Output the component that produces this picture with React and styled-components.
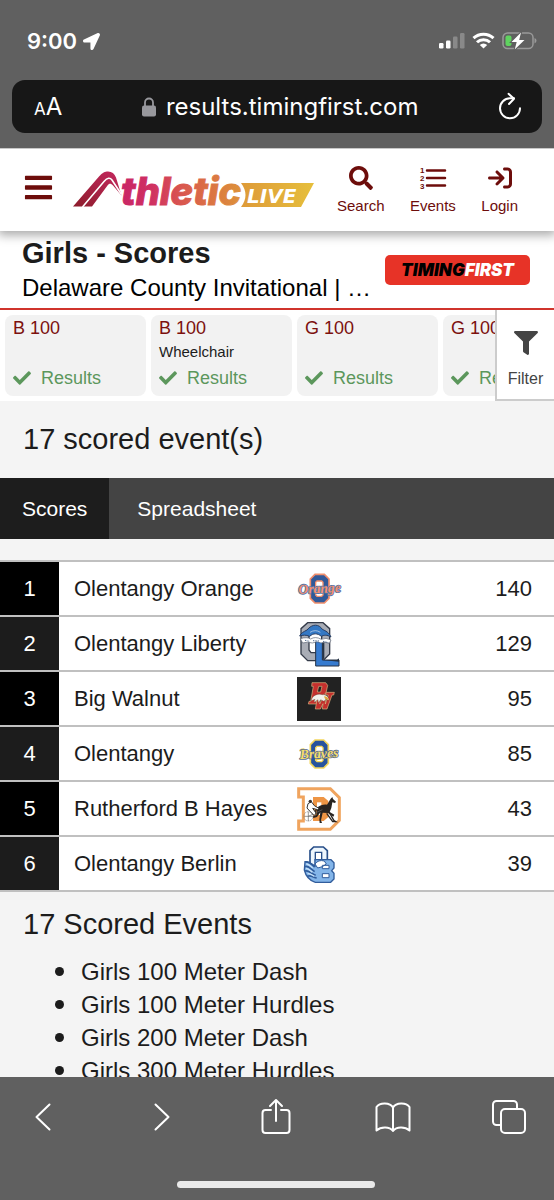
import React, { useState } from 'react';
import styled, { createGlobalStyle } from 'styled-components';
import { FaBars, FaCheck, FaFilter, FaLocationArrow, FaSearch } from 'react-icons/fa';
import { FaArrowRightToBracket } from 'react-icons/fa6';

const EVENTS = [
    { id: 1, name: 'B 100' },
    { id: 2, name: 'B 100', note: 'Wheelchair' },
    { id: 3, name: 'G 100' },
    { id: 4, name: 'G 100' },
];

const TEAMS = [
    { name: 'Olentangy Orange', score: 140, Logo: OrangeLogo },
    { name: 'Olentangy Liberty', score: 129, Logo: LibertyLogo },
    { name: 'Big Walnut', score: 95, Logo: WalnutLogo },
    { name: 'Olentangy', score: 85, Logo: BravesLogo },
    { name: 'Rutherford B Hayes', score: 43, Logo: HayesLogo },
    { name: 'Olentangy Berlin', score: 39, Logo: BerlinLogo },
];

const SCORED_EVENTS = [
    'Girls 100 Meter Dash',
    'Girls 100 Meter Hurdles',
    'Girls 200 Meter Dash',
    'Girls 300 Meter Hurdles',
];

const TABS = ['Scores', 'Spreadsheet'];

export default function App() {
    return (
        <Phone>
            <GlobalStyle />
            <BrowserTop />
            <Page>
                <SiteHeader />
                <MeetTitle />
                <EventStrip />
                <Scores />
            </Page>
            <BrowserBottom />
        </Phone>
    );
}

function BrowserTop() {
    return (
        <TopChrome>
            <StatusBar>
                <Clock>
                    9:00
                    <FaLocationArrow size={17} />
                </Clock>
                <StatusIcons />
            </StatusBar>
            <AddressBar>
                <TextSizeButton type="button" aria-label="Text size">
                    <small>A</small>A
                </TextSizeButton>
                <Address>
                    <svg width="14" height="20" viewBox="0 0 14 20" aria-hidden="true">
                        <path d="M3 9V5.500a4 4 0 0 1 8 0V9" fill="none" stroke="#98989d" strokeWidth="1.800" />
                        <rect y="8.500" width="14" height="11" rx="2" fill="#98989d" />
                    </svg>
                    results.timingfirst.com
                </Address>
                <ChromeButton type="button" aria-label="Reload">
                    <svg width="24" height="28" viewBox="0 0 24 28" {...line}>
                        <path d="M16 5.300H12A10 10 0 1 0 22 15.300" />
                        <path d="M10.500 .8 16 5.700 11 11" />
                    </svg>
                </ChromeButton>
            </AddressBar>
        </TopChrome>
    );
}

function StatusIcons() {
    return (
        <svg width="98" height="18" viewBox="0 0 98 18" aria-hidden="true">
            <rect x="0" y="11" width="4.500" height="5.500" rx="1.200" fill="#fff" />
            <rect x="7" y="8.500" width="4.500" height="8" rx="1.200" fill="#fff" />
            <rect x="14" y="4.500" width="4.500" height="12" rx="1.200" fill="#898989" />
            <rect x="21" y="1" width="4.500" height="15.500" rx="1.200" fill="#898989" />
            <g fill="none" stroke="#fff" strokeWidth="3">
                <path d="M34.500 6.200a14.500 14.500 0 0 1 20 0" />
                <path d="M38 10.300a9.300 9.300 0 0 1 13 0" />
            </g>
            <path d="M44.500 16.500 40.800 13a5.300 5.300 0 0 1 7.400 0z" fill="#fff" />
            <rect x="64" y="1" width="30" height="15.500" rx="4.500" fill="none" stroke="#999" strokeWidth="1.500" />
            <path d="M95.500 6v5.500q2-1 2-2.800t-2-2.700z" fill="#999" />
            <rect x="66.500" y="3.500" width="6" height="10.500" rx="2" fill="#5fd35f" />
            <path
                d="M82 .5 72.500 10h5.200l-2 7.500L85.500 8h-5.300z"
                fill="#fff"
                stroke="#606060"
                strokeWidth="2"
                paintOrder="stroke"
            />
        </svg>
    );
}

function SiteHeader() {
    return (
        <HeaderBar>
            <MenuButton type="button" aria-label="Menu">
                <FaBars size={31} />
            </MenuButton>
            <LogoLink href="#home" aria-label="Athletic Live">
                <AthleticLogo />
            </LogoLink>
            <HeaderNav>
                <HeaderLink href="#search">
                    <FaSearch size={24} />
                    Search
                </HeaderLink>
                <HeaderLink href="#events">
                    <NumberedListIcon />
                    Events
                </HeaderLink>
                <HeaderLink href="#login">
                    <FaArrowRightToBracket size={24} />
                    Login
                </HeaderLink>
            </HeaderNav>
        </HeaderBar>
    );
}

function AthleticLogo() {
    return (
        <svg width="244" height="40" viewBox="0 0 244 40" aria-hidden="true">
            <defs>
                <linearGradient id="brand" gradientUnits="userSpaceOnUse" x1="48" y1="0" x2="170" y2="0">
                    <stop offset="0" stopColor="#c92765" />
                    <stop offset=".25" stopColor="#cf2f63" />
                    <stop offset=".5" stopColor="#d9564f" />
                    <stop offset="1" stopColor="#dd9339" />
                </linearGradient>
                <linearGradient id="swoosh" x1="0" y1="1" x2="1" y2="0">
                    <stop offset="0" stopColor="#8c1c2b" />
                    <stop offset="1" stopColor="#c5285f" />
                </linearGradient>
                <linearGradient id="plate">
                    <stop offset="0" stopColor="#de9a38" />
                    <stop offset="1" stopColor="#e6bf3c" />
                </linearGradient>
            </defs>
            <path
                d="M1 36.500 27 6.500C30.500 2.500 33 1.500 36 1.500c4 0 6.500 2 8 6l5.500 18L41 15.500c-2-2.500-4-2.500-5.500 0L20 36.500z"
                fill="url(#swoosh)"
            />
            <path d="M10.500 37 32 11.500c3.500-4 6-4 8-1.500l9.500 14.500" fill="none" stroke="#fff" strokeWidth="1.600" />
            <text
                x="49"
                y="35"
                fill="url(#brand)"
                stroke="url(#brand)"
                strokeWidth="1"
                fontFamily="Inter, sans-serif"
                fontWeight="800"
                fontStyle="italic"
                fontSize="38"
            >
                thletic
            </text>
            <path d="M169 13h73l-13 24h-60q9-12 0-24z" fill="url(#plate)" />
            <text
                x="175"
                y="33"
                fill="#fff"
                fontFamily="'DejaVu Sans', sans-serif"
                fontWeight="bold"
                fontStyle="italic"
                fontSize="20"
            >
                LIVE
            </text>
        </svg>
    );
}

function NumberedListIcon() {
    return (
        <svg width="26" height="24" viewBox="0 0 26 24" aria-hidden="true">
            <path d="M7 4.500h18M7 12h18M7 19.500h18" stroke="currentColor" strokeWidth="2.500" strokeLinecap="round" />
            <g fill="currentColor" fontFamily="'Liberation Sans', sans-serif" fontWeight="bold" fontSize="8">
                <text x="0" y="7">1</text>
                <text x="0" y="15">2</text>
                <text x="0" y="23">3</text>
            </g>
        </svg>
    );
}

function MeetTitle() {
    return (
        <TitleBar>
            <TitleText>
                <Title>Girls - Scores</Title>
                <Subtitle>Delaware County Invitational | …</Subtitle>
            </TitleText>
            <TimerBadge href="#timer">
                <span>TIMING</span>FIRST
            </TimerBadge>
        </TitleBar>
    );
}

function EventStrip() {
    return (
        <Strip>
            <Cards>
                {EVENTS.map((event) => (
                    <EventCard key={event.id} href={`#event-${event.id}`}>
                        <EventName>{event.name}</EventName>
                        <EventNote>{event.note}</EventNote>
                        <EventStatus>
                            <FaCheck size={18} />
                            Results
                        </EventStatus>
                    </EventCard>
                ))}
            </Cards>
            <FilterButton type="button">
                <FaFilter size={24} />
                Filter
            </FilterButton>
        </Strip>
    );
}

function Scores() {
    const [tab, setTab] = useState('Scores');

    return (
        <>
            <Heading>17 scored event(s)</Heading>
            <Tabs>
                {TABS.map((name) => (
                    <Tab key={name} type="button" $active={name === tab} onClick={() => setTab(name)}>
                        {name}
                    </Tab>
                ))}
            </Tabs>
            <ScoreTable>
                <tbody>
                    {TEAMS.map(({ name, score, Logo }, i) => (
                        <tr key={name}>
                            <RankCell>{i + 1}</RankCell>
                            <NameCell>{name}</NameCell>
                            <LogoCell>
                                <Logo />
                            </LogoCell>
                            <ScoreCell>{score}</ScoreCell>
                        </tr>
                    ))}
                </tbody>
            </ScoreTable>
            <ListHeading>17 Scored Events</ListHeading>
            <EventList>
                {SCORED_EVENTS.map((name) => (
                    <EventItem key={name}>{name}</EventItem>
                ))}
            </EventList>
        </>
    );
}

function BrowserBottom() {
    return (
        <BottomChrome>
            <Toolbar>
                <ChromeButton type="button" aria-label="Back">
                    <svg width="36" height="36" viewBox="0 0 36 36" {...line}>
                        <path d="M24.500 5.500 11.500 18l13 12.500" />
                    </svg>
                </ChromeButton>
                <ChromeButton type="button" aria-label="Forward">
                    <svg width="36" height="36" viewBox="0 0 36 36" {...line}>
                        <path d="M13.500 5.500 26.500 18l-13 12.500" />
                    </svg>
                </ChromeButton>
                <ChromeButton type="button" aria-label="Share">
                    <svg width="36" height="36" viewBox="0 0 36 36" {...line}>
                        <path d="M13 11H7.500A3 3 0 0 0 4.500 14v17a3 3 0 0 0 3 3h21a3 3 0 0 0 3-3V14a3 3 0 0 0-3-3H23M18 22V1.500M12 7l6-6 6 6" />
                    </svg>
                </ChromeButton>
                <ChromeButton type="button" aria-label="Bookmarks">
                    <svg width="36" height="36" viewBox="0 0 36 36" {...line}>
                        <path d="M18 8.500C15 3.500 5 3 1.500 8v23.500C6 27.500 14.500 27.500 18 32c3.500-4.500 12-4.500 16.500-.5V8C31 3 21 3.500 18 8.500zV32" />
                    </svg>
                </ChromeButton>
                <ChromeButton type="button" aria-label="Tabs">
                    <svg width="36" height="36" viewBox="0 0 36 36" {...line}>
                        <path d="M10 26H5.500a3.500 3.500 0 0 1-3.500-3.500v-17A3.500 3.500 0 0 1 5.500 2h17A3.500 3.500 0 0 1 26 5.500V9" />
                        <rect x="10" y="10" width="24" height="24" rx="4" />
                    </svg>
                </ChromeButton>
            </Toolbar>
            <HomeIndicator />
        </BottomChrome>
    );
}

const line = {
    fill: 'none',
    stroke: '#fff',
    strokeWidth: 2,
    strokeLinecap: 'round',
    strokeLinejoin: 'round',
};

const script = {
    fontFamily: "'Liberation Serif', serif",
    fontWeight: 'bold',
    fontStyle: 'italic',
    strokeWidth: 5,
    paintOrder: 'stroke',
    strokeLinejoin: 'round',
};

function OrangeLogo() {
    return (
        <TeamLogo viewBox="0 0 132 132">
            <path d="M54 22h28l14 14v58l-14 14H54L40 94V36z" fill="#315998" stroke="#f08e6c" strokeWidth="5" />
            <path d="M60 42h14l4 4v38l-4 4H60l-4-4V46z" fill="#fff" stroke="#f08e6c" strokeWidth="4" />
            <text x="4" y="78" fill="#f58f70" stroke="#5276a8" transform="rotate(-3 66 66)" {...script} fontSize="41">
                Orange
            </text>
        </TeamLogo>
    );
}

function LibertyLogo() {
    return (
        <TeamLogo viewBox="0 0 132 132">
            <path d="M32 2h46l20 18v76l-20 20H32L12 96V20z" fill="#a9adb6" stroke="#343b49" strokeWidth="4" />
            <path d="M42 28h26l6 8v48l-6 8H42l-6-8V36z" fill="#fff" stroke="#343b49" strokeWidth="4" />
            <path d="M56 54h20v60h50v18H56z" fill="#367bd0" stroke="#263347" strokeWidth="3" />
            <path d="M76 114l6-5V52l-6 2M76 114h44l6-5v10" fill="#273344" />
            <path
                d="M8 42c4-9 12-13 22-18C46 4 66 6 76 22c10 5 20 9 26 23-12-7-22-6-29-2-12-10-24-10-35 0-12-5-20-4-30-1z"
                fill="#3478c4"
                stroke="#263b60"
                strokeWidth="3"
            />
            <path d="M10 50q20-6 31 1 14-9 32 1 14-7 29 2l-5 10q-14-6-25-1-13-7-26 0-14-5-29 0z" fill="#fff" stroke="#596273" strokeWidth="2" />
            <path d="M24 55l14 3M48 56l20 1M78 58l16 4" stroke="#526b90" strokeWidth="3" strokeDasharray="3 2" />
            <path d="M39 31q16-10 31 0" fill="none" stroke="#d7e4f2" strokeWidth="2" />
        </TeamLogo>
    );
}

function WalnutLogo() {
    return (
        <TeamLogo viewBox="0 0 132 132">
            <path d="M0 0h132v132H0z" fill="#222" />
            <path
                d="M45 17h41l6 8-5 23-10 8H57l-5 17h8l-2 8H34l2-8h5l8-45h-5zM65 28l-4 17h10l4-17z"
                fill="#c4302d"
                stroke="#d9b780"
                strokeWidth="2"
                fillRule="evenodd"
            />
            <path
                d="M58 60h13l-3 21 10-20h8l-1 20 9-27h-9l3-8h24l-2 8h-5L90 96H76l2-16-8 16H55l5-28h-4z"
                fill="#c4302d"
                stroke="#d9b780"
                strokeWidth="2"
            />
            <path d="M46 62c6-9 20-13 30-9 13-1 19 7 20 17l-9-4-6 7-10-5-7 9-1-9-12 8 3-9-12 4z" fill="#f3f1eb" stroke="#544a3b" />
            <path d="M81 58q12 0 15 12l-12-5z" fill="#dca83e" />
        </TeamLogo>
    );
}

function BravesLogo() {
    return (
        <TeamLogo viewBox="0 0 132 132">
            <path d="M54 24h26l14 14v56l-14 14H54L40 94V38z" fill="#27539d" stroke="#f3d65d" strokeWidth="5" />
            <path d="M60 43h14l4 4v38l-4 4H60l-4-4V47z" fill="#fff" stroke="#f3d65d" strokeWidth="4" />
            <path d="M8 58q0-7 14-7M54 84q30-6 62-14" fill="none" stroke="#e8ce59" strokeWidth="4" />
            <text x="8" y="78" fill="#f5dd6d" stroke="#556b8c" transform="rotate(-3 66 66)" {...script} fontSize="41">
                Braves
            </text>
        </TeamLogo>
    );
}

function HayesLogo() {
    return (
        <TeamLogo viewBox="0 0 132 132">
            <path d="M5 5h95l27 27v68l-27 27H5v-25h14V30H5z" fill="#fff" stroke="#f0a45e" strokeWidth="9" />
            <path d="M48 30h32l14 12v48l-14 12H48z" fill="#ee9545" />
            <path d="M60 46h13v38H60z" fill="#fff" />
            <path
                d="M60 62c10-8 19-10 30-9l11-18 5-5 2 6 9 8-3 4-8-2-3 17-5 12 14 8-3 6-16-11-16-1-5 23 3 8h-7l-1-10 3-22-10 14-11 3-2-5 11-4z"
                fill="#282320"
            />
            <path d="M96 75l15 26 5 3h-9L89 79M60 62l-8 20" fill="none" stroke="#282320" strokeWidth="4" />
            <circle cx="34" cy="88" r="14" fill="none" stroke="#777" strokeWidth="2" strokeDasharray="4 2" />
            <path d="M34 88l42-20M34 74v28M22 88h24" stroke="#666" strokeWidth="2" />
            <path d="M33 50l10-6 9 12 14 8-4 4-15-4 10 14-5 8-14-14-8-9z" fill="#fff" stroke="#333" strokeWidth="3" />
            <circle cx="40" cy="43" r="5" fill="#38302c" />
        </TeamLogo>
    );
}

function BerlinLogo() {
    return (
        <TeamLogo viewBox="0 0 132 132">
            <path d="M50 15h29l12 11v45l-9 10H50l-11-10V26z" fill="#edf6fd" stroke="#284f89" strokeWidth="5" />
            <path d="M55 31h19v36H55z" fill="#fff" stroke="#284f89" strokeWidth="4" />
            <path
                d="M24 59c10 0 20 6 30 13V53h48l9 9v16l-7 8 7 8v17l-10 10H55C39 116 26 101 22 84z"
                fill="#83b5e9"
                stroke="#315d9c"
                strokeWidth="4"
            />
            <path
                d="M25 60c11-2 20 8 28 15M23 74c11-5 20 8 30 15M24 87c12-3 18 7 32 13M31 103c10-5 18 3 28 5"
                fill="none"
                stroke="#315d9c"
                strokeWidth="5"
            />
            <path d="M28 66c8 0 13 7 19 12M27 79c7 0 13 7 19 12M32 94c7 0 12 5 20 9" fill="none" stroke="#c7e1f7" strokeWidth="4" />
            <path d="M54 66q10-14 28-9l6 9-12 8-14 4zM76 70h20v10H76zM76 95h20v12H76z" fill="#fff" stroke="#315d9c" strokeWidth="3" />
        </TeamLogo>
    );
}

const GlobalStyle = createGlobalStyle`
    * {
        box-sizing: border-box;
    }

    body {
        margin: 0;
        font-family: 'Liberation Sans', Arial, sans-serif;
        color: #1c1c1c;
        background-color: #f4f4f4;
    }

    svg {
        flex: none;
        overflow: visible;
    }

    button {
        padding: 0;
        border: 0;
        background: none;
        color: inherit;
        font-family: inherit;
        cursor: pointer;
    }

    a {
        color: inherit;
        text-decoration: none;
    }
`;

const Phone = styled.div`
    height: 100vh;

    display: flex;
    flex-direction: column;
`;

const TopChrome = styled.header`
    flex: none;
    padding: 24px 12px 15px;
    border-bottom: 1px solid #c8c8c8;

    background-color: #606060;
    color: #fff;
    font-family: Inter, sans-serif;
`;

const StatusBar = styled.div`
    height: 34px;
    margin-bottom: 22px;
    padding: 0 5px 0 15px;

    display: flex;
    align-items: center;
    justify-content: space-between;
`;

const Clock = styled.div`
    display: flex;
    align-items: center;
    gap: 6px;

    font-size: 22px;
    font-weight: 600;
`;

const AddressBar = styled.div`
    height: 53px;
    padding: 0 20px 0 22px;

    display: flex;
    align-items: center;
    justify-content: space-between;

    background-color: #171717;
    border-radius: 13px;
`;

const TextSizeButton = styled.button`
    font-size: 24px;

    small {
        font-size: 17px;
    }
`;

const Address = styled.div`
    display: flex;
    align-items: center;
    gap: 10px;

    font-size: 24px;
`;

const ChromeButton = styled.button`
    display: flex;
`;

const Page = styled.main`
    flex: 1;
    min-height: 0;
    overflow: hidden;
`;

const HeaderBar = styled.div`
    position: relative;
    height: 82px;
    padding: 0 36px 0 23px;

    display: flex;
    align-items: center;

    background-color: #fff;
    box-shadow: 0 2px 10px 2px rgba(0, 0, 0, 0.35);
`;

const MenuButton = styled.button`
    display: flex;
    margin-right: 18px;
    margin-bottom: 6px;

    color: #6d0d0b;
`;

const LogoLink = styled.a`
    display: flex;
`;

const HeaderNav = styled.nav`
    flex: 1;
    padding-left: 21px;

    display: flex;
    justify-content: space-between;
`;

const HeaderLink = styled.a`
    display: flex;
    flex-direction: column;
    align-items: center;
    gap: 7px;

    color: #6d0d0b;
    font-size: 15px;
`;

const TitleBar = styled.div`
    height: 79px;
    padding: 0 24px 0 22px;
    border-bottom: 2px solid #d0342c;

    display: flex;
    align-items: center;
    justify-content: space-between;

    background-color: #fff;
`;

const TitleText = styled.div`
    min-width: 0;
`;

const Title = styled.h1`
    margin: 0;

    font-size: 29px;
    line-height: 36px;
`;

const Subtitle = styled.p`
    margin: 0;
    overflow: hidden;

    color: #000;
    font-size: 24px;
    line-height: 34px;
    text-overflow: ellipsis;
    white-space: nowrap;
`;

const TimerBadge = styled.a`
    flex: none;
    width: 145px;
    border-radius: 5px;

    background-color: #e73327;
    color: #fff;
    font-family: Inter, sans-serif;
    font-size: 17px;
    font-weight: 900;
    font-style: italic;
    line-height: 30px;
    text-align: center;

    span {
        color: #000;
    }
`;

const Strip = styled.section`
    display: flex;

    background-color: #fff;
`;

const Cards = styled.div`
    flex: 1;
    min-width: 0;
    padding: 5px 0 5px 5px;
    overflow: hidden;

    display: flex;
    gap: 5px;
`;

const EventCard = styled.a`
    flex: none;
    width: 141px;
    height: 81px;
    padding: 1px 8px;
    border-radius: 8px;

    display: flex;
    flex-direction: column;

    background-color: #f2f2f2;
`;

const EventName = styled.span`
    color: #7c100e;
    font-size: 18px;
    line-height: 24px;
`;

const EventNote = styled.span`
    height: 24px;

    font-size: 15px;
    line-height: 24px;
`;

const EventStatus = styled.span`
    display: flex;
    align-items: center;
    gap: 10px;

    color: #5c975c;
    font-size: 18px;
    line-height: 28px;
`;

const FilterButton = styled.button`
    flex: none;
    width: 59px;
    padding-top: 10px;
    border-left: 2px solid #ccc;
    border-bottom: 2px solid #ccc;

    display: flex;
    flex-direction: column;
    align-items: center;
    justify-content: center;
    gap: 15px;

    color: #444;
    font-size: 16px;
`;

const Heading = styled.h2`
    margin: 0;
    padding: 20px 23px;

    font-size: 29px;
    font-weight: normal;
    line-height: 37px;
`;

const Tabs = styled.div`
    display: flex;

    background-color: #444;
`;

const Tab = styled.button`
    padding: 0 28px;

    background-color: ${({ $active }) => ($active ? '#1d1d1d' : 'transparent')};
    color: #fff;
    font-size: 21px;
    line-height: 61px;

    &:first-child {
        padding: 0 22px;
    }
`;

const ScoreTable = styled.table`
    width: 100%;
    margin-top: 21px;
    border-collapse: collapse;

    background-color: #fff;
    font-size: 22px;

    tr {
        border-top: 2px solid #c0c0c0;
        border-bottom: 2px solid #c0c0c0;
    }

    td {
        height: 55px;
        padding: 0;
    }
`;

const RankCell = styled.td`
    width: 59px;

    background-color: #000;
    color: #fff;
    text-align: center;

    tr:nth-child(even) & {
        background-color: #1c1c1c;
    }
`;

const NameCell = styled.td`
    width: 43%;

    && {
        padding-left: 15px;
    }
`;

const LogoCell = styled.td`
    line-height: 0;
`;

const TeamLogo = styled.svg`
    width: 44px;
    height: 44px;
`;

const ScoreCell = styled.td`
    text-align: right;

    && {
        padding-right: 22px;
    }
`;

const ListHeading = styled.h2`
    margin: 14px 23px 13px;

    font-size: 29px;
    font-weight: normal;
    line-height: 36px;
`;

const EventList = styled.ul`
    margin: 0;
    padding-left: 55px;

    font-size: 24px;
    line-height: 33px;
    list-style: none;
`;

const EventItem = styled.li`
    display: flex;
    align-items: center;
    gap: 17px;

    &::before {
        content: '';
        flex: none;
        width: 9px;
        height: 9px;
        border-radius: 50%;

        background-color: #1c1c1c;
    }
`;

const BottomChrome = styled.footer`
    flex: none;
    padding: 22px 27px 12px 25px;

    background-color: #606060;
`;

const Toolbar = styled.div`
    display: flex;
    justify-content: space-between;
`;

const HomeIndicator = styled.div`
    width: 198px;
    height: 7px;
    margin: 46px auto 0;
    border-radius: 4px;

    background-color: #e9e9e9;
`;
